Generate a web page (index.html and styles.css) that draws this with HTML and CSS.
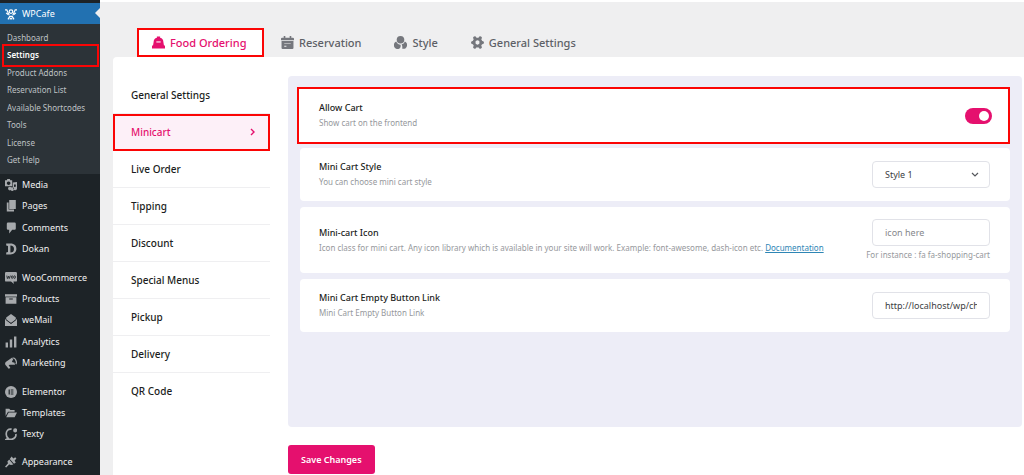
FILE: index.html
```html
<!DOCTYPE html>
<html lang="en">
<head>
<meta charset="utf-8">
<title>WPCafe Settings</title>
<link rel="stylesheet" href="styles.css">
</head>
<body>
<div class="layout">
  <aside class="sidebar">
    <a class="menu-link menu-current" href="#"><svg class="icon" viewBox="0 0 20 20" fill="none" stroke="currentColor" stroke-width="2"><circle cx="10" cy="6" r="3"/><path d="M0 3h3l4 9M20 3h-3l-4 9M5 19l3-5h4l3 5M2 8l3 3M18 8l-3 3M8 19l2-2 2 2"/></svg>WPCafe</a>
    <ul class="submenu">
      <li><a href="#">Dashboard</a></li>
      <li class="marked"><a class="sub-current" href="#">Settings</a></li>
      <li><a href="#">Product Addons</a></li>
      <li><a href="#">Reservation List</a></li>
      <li><a href="#">Available Shortcodes</a></li>
      <li><a href="#">Tools</a></li>
      <li><a href="#">License</a></li>
      <li><a href="#">Get Help</a></li>
    </ul>
    <ul class="menu">
      <li><a class="menu-link" href="#"><svg class="icon" viewBox="0 0 20 20" fill="currentColor"><path fill-rule="evenodd" d="M1 2h2l1-2h4l1 2h3v10H0V2zM6 4a3 3 0 1 0 .1 0zM13 6l7-1v11a3 3 0 1 1-2-3V9h-3v8a3 3 0 1 1-2-3z"/><circle cx="8" cy="16" r="3"/></svg>Media</a></li>
      <li><a class="menu-link" href="#"><svg class="icon" viewBox="0 0 20 20" fill="currentColor"><path d="M7 0h11v15H7z"/><path d="M3 4h3v12h9v3H3z"/></svg>Pages</a></li>
      <li><a class="menu-link" href="#"><svg class="icon" viewBox="0 0 20 20" fill="currentColor"><path d="M5 1h11a2 2 0 0 1 2 2v8a2 2 0 0 1-2 2h-4l-5 6v-6H5a2 2 0 0 1-2-2V3a2 2 0 0 1 2-2z"/></svg>Comments</a></li>
      <li><a class="menu-link" href="#"><svg class="icon" viewBox="0 0 20 20" fill="currentColor"><path fill-rule="evenodd" d="M2 1h7c7 0 10 4 10 9s-4 9-10 9H2v-3l3-1V5L2 4zM9 4v12c4 0 6-2 6-6s-2-6-6-6z"/></svg>Dokan</a></li>
    </ul>
    <ul class="menu">
      <li><a class="menu-link" href="#"><svg class="icon" viewBox="0 0 20 20"><path fill="currentColor" d="M2 0h16a2 2 0 0 1 2 2v12a2 2 0 0 1-2 2h-4l1 4-5-4H2a2 2 0 0 1-2-2V2a2 2 0 0 1 2-2z"/><path d="M3 6l1 5 2-4 1 4 2-5" fill="none" stroke="#1d2327" stroke-width="1.4"/><ellipse cx="12" cy="8.500" rx="1.400" ry="2.300" fill="none" stroke="#1d2327" stroke-width="1.300"/><ellipse cx="16" cy="8.500" rx="1.400" ry="2.300" fill="none" stroke="#1d2327" stroke-width="1.300"/></svg>WooCommerce</a></li>
      <li><a class="menu-link" href="#"><svg class="icon" viewBox="0 0 20 20" fill="currentColor"><path d="M0 2h20v4H0z"/><path fill-rule="evenodd" d="M1 7h18v11H1zM7 9v2h6V9z"/></svg>Products</a></li>
      <li><a class="menu-link" href="#"><svg class="icon" viewBox="0 0 20 20" fill="currentColor"><path d="M10 0l8 6v3l-8 6-8-6V6z"/><path d="M0 8l10 8 10-8v12H0z"/><path d="M1 9l9 7 9-7" fill="none" stroke="#1d2327" stroke-width="1.500"/></svg>weMail</a></li>
      <li><a class="menu-link" href="#"><svg class="icon" viewBox="0 0 20 20" fill="currentColor"><path d="M1 11h4v8H1zM8 6h4v13H8zM15 1h4v18h-4z"/></svg>Analytics</a></li>
      <li><a class="menu-link" href="#"><svg class="icon" viewBox="0 0 20 20" fill="currentColor"><path d="M12 1l5 12-8 0-3 .5 3 5-3 1-4-5C-1 13 0 8 3 7z"/><path d="M13 2c3-2 8 6 5 10" fill="none" stroke="currentColor" stroke-width="2"/><circle cx="14" cy="7" r="2" fill="#1d2327"/></svg>Marketing</a></li>
    </ul>
    <ul class="menu">
      <li><a class="menu-link" href="#"><svg class="icon" viewBox="0 0 20 20"><circle cx="10" cy="10" r="10" fill="currentColor"/><path d="M6 6h2v8H6zM9.500 6H14v1.600H9.500zM9.500 9.200H14v1.600H9.500zM9.500 12.400H14V14H9.500z" fill="#1d2327"/></svg>Elementor</a></li>
      <li><a class="menu-link" href="#"><svg class="icon" viewBox="0 0 20 20" fill="currentColor"><path d="M1 3h6l2 2h7v3H5l-4 7z"/><path d="M6 9h14l-4 8H2z"/></svg>Templates</a></li>
      <li><a class="menu-link" href="#"><svg class="icon" viewBox="0 0 20 20" fill="none" stroke="currentColor" stroke-width="2.800"><path d="M11 2C5 1 2 5 2 10c0 3 1 5 3 7l-3 2h9c5-1 8-5 7-9"/><circle cx="17" cy="4" r="2" fill="currentColor"/></svg>Texty</a></li>
    </ul>
    <ul class="menu">
      <li><a class="menu-link" href="#"><svg class="icon" viewBox="0 0 20 20" fill="currentColor"><path d="M11 1l3 3 3-2 2 2-3 4 2 3-3 2-7-8zM7 6l7 8-4 1-3-1-5 5-2-1 5-6-1-3z"/></svg>Appearance</a></li>
    </ul>
  </aside>

  <main class="main">
    <nav class="tabs">
      <a class="tab tab-current marked" href="#"><svg class="tab-icon" viewBox="0 0 24 24"><path fill="currentColor" d="M9 3V1h6v2c4 1 6 4 6 8l1 6H2l1-6c0-4 2-7 6-8zM2 17h20a2 2 0 0 1 2 2v4H0v-4a2 2 0 0 1 2-2z"/><path d="M8 11h8" stroke="#fff" stroke-width="2"/></svg>Food Ordering</a>
      <a class="tab" href="#"><svg class="tab-icon" viewBox="0 0 24 24"><path fill="currentColor" d="M5 0h3v3h8V0h3v3h3a2 2 0 0 1 2 2v3H0V5a2 2 0 0 1 2-2h3zM1 9h22v13a2 2 0 0 1-2 2H3a2 2 0 0 1-2-2z"/><path fill="#efeff0" d="M6 13h12v1H6zM6 18h4v2H6z"/></svg>Reservation</a>
      <a class="tab" href="#"><svg class="tab-icon" viewBox="0 0 24 24" fill="currentColor"><circle cx="12" cy="7" r="7"/><path d="M4 10c2 4 5 6 8 6 2 7-5 10-9 7-5-3-4-11 1-13zM20 10c5 2 6 9 1 13-2 1-4 1-6 0 1-3 0-6-1-8 3 0 5-2 6-5z"/></svg>Style</a>
      <a class="tab" href="#"><svg class="tab-icon" viewBox="0 0 24 24" fill="none" stroke="currentColor"><circle cx="12" cy="12" r="6.500" stroke-width="5"/><path stroke-width="6" stroke-linecap="round" d="M7 3.500l1 2M17 3.500l-1 2M3 12h2M21 12h-2M7 20.500l1-2M17 20.500l-1-2"/></svg>General Settings</a>
    </nav>

    <div class="panel">
      <nav class="side-nav">
        <a class="side-link" href="#">General Settings</a>
        <a class="side-link side-current marked" href="#">Minicart<svg class="chevron" viewBox="0 0 8 8"><path d="M2 1l3 3-3 3" fill="none" stroke="currentColor" stroke-width="1.400"/></svg></a>
        <a class="side-link" href="#">Live Order</a>
        <a class="side-link" href="#">Tipping</a>
        <a class="side-link" href="#">Discount</a>
        <a class="side-link" href="#">Special Menus</a>
        <a class="side-link" href="#">Pickup</a>
        <a class="side-link" href="#">Delivery</a>
        <a class="side-link" href="#">QR Code</a>
      </nav>

      <form class="settings">
        <div class="cards">
          <div class="card marked">
            <div class="text"><label class="title" for="allow">Allow Cart</label><p class="hint">Show cart on the frontend</p></div>
            <input class="toggle" type="checkbox" id="allow" checked>
          </div>
          <div class="card">
            <div class="text"><label class="title" for="style">Mini Cart Style</label><p class="hint">You can choose mini cart style</p></div>
            <div class="select-wrap"><select class="field" id="style"><option>Style 1</option><option>Style 2</option></select><svg class="chevron caret" viewBox="0 0 8 8"><path d="M1 2l3 3 3-3" fill="none" stroke="currentColor" stroke-width="1.200"/></svg></div>
          </div>
          <div class="card">
            <div class="text"><label class="title" for="icon">Mini-cart Icon</label><p class="hint">Icon class for mini cart. Any icon library which is available in your site will work. Example: font-awesome, dash-icon etc. <a class="doc" href="#">Documentation</a></p></div>
            <div class="control"><input class="field" type="text" id="icon" placeholder="icon here"><p class="hint note">For instance : fa fa-shopping-cart</p></div>
          </div>
          <div class="card">
            <div class="text"><label class="title" for="link">Mini Cart Empty Button Link</label><p class="hint">Mini Cart Empty Button Link</p></div>
            <input class="field" type="text" id="link" value="http://localhost/wp/checkout">
          </div>
        </div>
        <button class="save" type="submit">Save Changes</button>
      </form>
    </div>
  </main>
</div>
</body>
</html>
```
FILE: styles.css
```css
* { box-sizing: border-box; }
body {
  margin: 0;
  background: #efeff0;
  color: #1b1d21;
  font: 9px/12px "Noto Sans", "Open Sans", sans-serif;
}
a { color: inherit; text-decoration: none; }
ul { list-style: none; margin: 0; padding: 0; }
p { margin: 0; }
.layout { display: flex; min-height: 100vh; }
.marked { outline: 2px solid #fb0505; outline-offset: -2px; }

.sidebar {
  flex: 0 0 100px;
  display: flex;
  flex-direction: column;
  gap: 7px;
  padding-top: 3px;
  background: #1d2327;
  color: #f0f0f1;
  height: 100vh;
  overflow: hidden;
}
.menu-link { display: flex; align-items: center; gap: 5px; padding-left: 5px; }
.icon { width: 12px; height: 12px; flex: none; color: #a7aaad; }
.menu-current {
  position: relative;
  height: 21px;
  flex: none;
  background: #2271b1;
  color: #fff;
  margin-bottom: -7px;
}
.menu-current .icon { color: #fff; }
.menu-current::after {
  content: "";
  position: absolute;
  right: 0;
  top: 5px;
  border: 5px solid transparent;
  border-right-color: #efeff0;
  border-left: 0;
}
.submenu {
  display: grid;
  grid-auto-rows: 1fr;
  align-items: center;
  flex: none;
  min-height: 150px;
  padding: 5px 0;
  margin-bottom: -7px;
  background: #2c3338;
  color: #bfc2c5;
  font-size: 8px;
}
.submenu li { display: flex; align-items: center; height: 23px; margin: -3px 1px -3px 2px; padding-left: 5px; }
.sub-current { color: #fff; font-weight: 600; }
.menu { display: grid; grid-auto-rows: 1fr; align-items: center; flex: none; }
.menu:nth-of-type(2) { min-height: 86px; }
.menu:nth-of-type(3) { min-height: 107px; }
.menu:nth-of-type(4) { min-height: 63px; }
.menu:nth-of-type(5) { min-height: 21px; }

.main { flex: 1; min-width: 0; display: flex; flex-direction: column; border-top: 2px solid #fff; }
.tabs { display: flex; align-items: stretch; height: 55px; padding: 26px 0 0 37px; }
.tab {
  display: flex;
  align-items: center;
  gap: 5px;
  padding: 0 16px 0 17px;
  color: #5d6066;
  font-size: 11px;
  font-weight: 500;
  white-space: nowrap;
}
.tab-current { width: 127px; padding: 0 0 0 15px; background: #fff; color: #e5106e; }
.tab-icon { width: 13px; height: 13px; flex: none; color: #75777d; }
.tab-current .tab-icon { color: inherit; }
.panel {
  flex: 1;
  display: flex;
  gap: 18px;
  margin-left: 13px;
  padding: 19px 2px 1px 0;
  background: #fff;
  border-radius: 4px 0 0 0;
}
.side-nav { flex: 0 0 157px; padding-top: 1px; }
.side-link {
  display: flex;
  align-items: center;
  justify-content: space-between;
  height: 37px;
  padding: 0 13px 0 18px;
  border-bottom: 1px solid #efeff1;
  font-size: 10px;
  font-weight: 500;
}
.side-link:last-child { border-color: transparent; }
.side-current { background: #fdf0f8; color: #e5106e; }
.chevron { width: 8px; height: 8px; flex: none; }

.settings { flex: 1; min-width: 0; display: flex; flex-direction: column; align-items: flex-start; gap: 18px; }
.cards {
  width: 100%;
  min-height: 351px;
  padding: 11px 12px;
  display: flex;
  flex-direction: column;
  gap: 6px;
  background: #ededf7;
  border-radius: 4px;
}
.card {
  display: flex;
  align-items: center;
  justify-content: space-between;
  gap: 12px;
  min-height: 53px;
  padding: 12px 20px 12px 19px;
  background: #fff;
  border-radius: 4px;
}
.card.marked { min-height: 57px; margin: 0 0 -2px -3px; padding: 12px 18px 12px 22px; border-radius: 0; }
.title { display: block; font-weight: 500; margin-bottom: 3px; }
.hint { color: #96989c; font-size: 8px; }
.doc { color: #2e86b5; text-decoration: underline; }
.note { margin-top: 3px; }
.control { display: flex; flex-direction: column; align-items: flex-end; white-space: nowrap; }
.field {
  width: 118px;
  height: 27px;
  padding: 0 12px;
  border: 1px solid #e1e2e8;
  border-radius: 4px;
  background: #fff;
  color: #3c3e43;
  font: inherit;
  appearance: none;
}
.field::placeholder { color: #85878c; opacity: 1; }
.select-wrap { position: relative; display: flex; }
.caret { position: absolute; right: 11px; top: 10px; color: #55575c; pointer-events: none; }
.toggle {
  appearance: none;
  width: 27px;
  height: 16px;
  margin: 0;
  padding: 3px;
  display: flex;
  justify-content: flex-end;
  border-radius: 8px;
  background: #e5106e;
}
.toggle::after { content: ""; width: 10px; height: 10px; border-radius: 50%; background: #fff; }
.save {
  height: 29px;
  padding: 0 13px;
  border: 0;
  border-radius: 3px;
  background: #e5106e;
  color: #fff;
  font: inherit;
  font-weight: 600;
}
```
